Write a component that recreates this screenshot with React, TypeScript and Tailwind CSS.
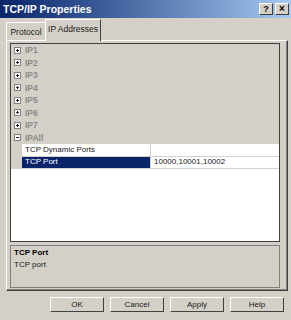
import React from "react";

const cats = ["IP1", "IP2", "IP3", "IP4", "IP5", "IP6", "IP7"];

function Box({ minus }: { minus?: boolean }) {
  return (
    <div className="w-[7px] h-[7px] border border-[#808080] bg-white relative shrink-0">
      <div className="absolute left-[1px] top-[2px] w-[3px] h-[1px] bg-[#202020]" />
      {!minus && <div className="absolute left-[2px] top-[1px] w-[1px] h-[3px] bg-[#202020]" />}
    </div>
  );
}

function Btn({ label }: { label: string }) {
  return (
    <div className="w-[54px] h-[15px] bg-[#d4d0c8] border border-t-white border-l-white border-r-[#404040] border-b-[#404040] flex items-center justify-center text-[8px] text-[#202020]">
      {label}
    </div>
  );
}

export default function App() {
  return (
    <div
      className="w-[291px] h-[320px] bg-[#d4d0c8] flex flex-col overflow-hidden"
      style={{ fontFamily: '"Liberation Sans", Arial, sans-serif' }}
    >
      {/* Title bar */}
      <div className="h-[18px] bg-gradient-to-r from-[#0a246a] to-[#a6caf0] flex items-center justify-between pl-[3px] pr-[2px] shrink-0">
        <span className="text-white font-bold text-[10.5px] leading-none">TCP/IP Properties</span>
        <div className="flex gap-[2px]">
          <div className="w-[14px] h-[12px] bg-[#d4d0c8] border border-t-white border-l-white border-r-[#404040] border-b-[#404040] flex items-center justify-center text-[9px] font-bold leading-none text-black">?</div>
          <div className="w-[14px] h-[12px] bg-[#d4d0c8] border border-t-white border-l-white border-r-[#404040] border-b-[#404040] flex items-center justify-center text-[10px] font-bold leading-none text-black">×</div>
        </div>
      </div>

      {/* Tabs */}
      <div className="h-[22px] pl-[6px] flex items-end shrink-0 relative z-10">
        <div className="h-[18px] w-[40px] border-t border-l border-white border-r border-r-[#808080] flex items-center justify-center text-[8.5px] text-[#202020]">
          <span className="mt-[2px]">Protocol</span>
        </div>
        <div className="h-[22px] w-[56px] border-t border-l border-white border-r border-r-[#404040] bg-[#d4d0c8] flex items-center justify-center text-[8.5px] text-[#202020] -mb-[1px] -ml-[1px]">
          <span className="-mt-[3px]">IP Addresses</span>
        </div>
      </div>

      {/* Panel */}
      <div className="ml-[6px] w-[282px] h-[251px] border border-t-white border-l-white border-r-[#404040] border-b-[#404040] shrink-0">
        <div className="w-full h-full border-r border-b border-[#808080] pl-[3px] pt-[2px] flex flex-col">
          {/* Grid */}
          <div className="w-[270px] h-[199px] border border-[#404040] bg-white flex flex-col overflow-hidden">
            {cats.map((c) => (
              <div key={c} className="h-[12.5px] bg-[#d4d0c8] flex items-center">
                <div className="w-[12px] flex justify-center pl-[1px]">
                  <Box />
                </div>
                <span className="ml-[2px] text-[8.5px] font-bold text-[#8a8a8a] leading-none">{c}</span>
              </div>
            ))}
            <div className="h-[12.5px] bg-[#d4d0c8] flex items-center">
              <div className="w-[12px] flex justify-center pl-[1px]">
                <Box minus />
              </div>
              <span className="ml-[2px] text-[8.5px] font-bold text-[#8a8a8a] leading-none">IPAll</span>
            </div>
            <div className="h-[12.5px] flex bg-[#d4d0c8]">
              <div className="w-[11px] shrink-0" />
              <div className="w-[128px] bg-white border-b border-[#d4d0c8] flex items-center pl-[3px] text-[8px] text-[#202020] leading-none">TCP Dynamic Ports</div>
              <div className="flex-1 bg-white border-b border-l border-[#d4d0c8]" />
            </div>
            <div className="h-[12.5px] flex bg-[#d4d0c8]">
              <div className="w-[11px] shrink-0" />
              <div className="w-[128px] bg-[#0a246a] border-b border-[#d4d0c8] flex items-center pl-[3px] text-[8px] text-white leading-none">TCP Port</div>
              <div className="flex-1 bg-white border-b border-l border-[#d4d0c8] flex items-center pl-[3px] text-[8px] text-[#202020] leading-none">10000,10001,10002</div>
            </div>
            <div className="flex-1 bg-white" />
          </div>
          {/* Description */}
          <div className="mt-[3px] w-[270px] h-[43px] border border-[#808080] px-[3px] pt-[3px] flex flex-col gap-[4px]">
            <span className="text-[8px] font-bold text-black leading-none">TCP Port</span>
            <span className="text-[8px] text-[#202020] leading-none">TCP port</span>
          </div>
        </div>
      </div>

      {/* Buttons */}
      <div className="mt-[6px] pl-[50px] flex gap-[6px]">
        <Btn label="OK" />
        <Btn label="Cancel" />
        <Btn label="Apply" />
        <Btn label="Help" />
      </div>
    </div>
  );
}
